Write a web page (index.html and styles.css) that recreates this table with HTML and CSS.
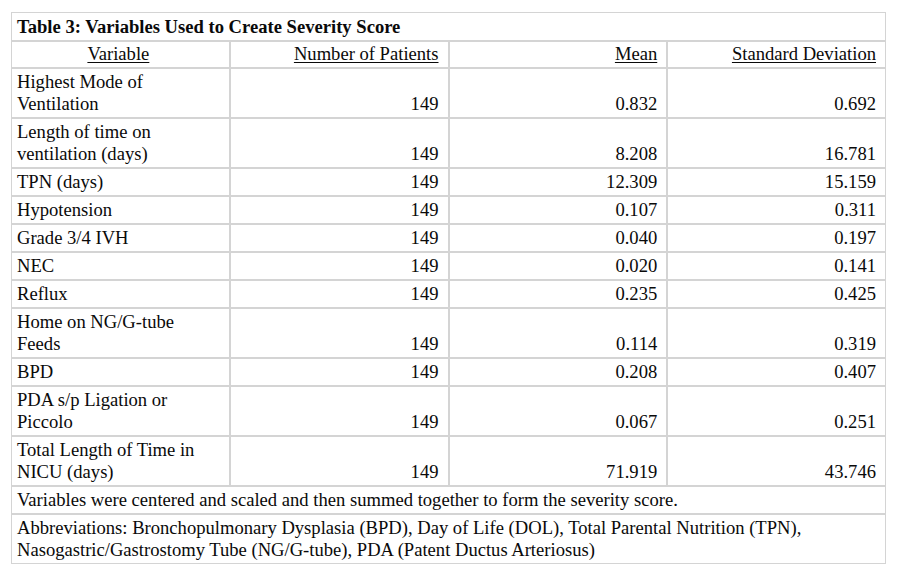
FILE: index.html
```html
<!DOCTYPE html>
<html>
<head>
<meta charset="utf-8">
<link rel="stylesheet" href="styles.css">
</head>
<body>
<table class="tbl">
  <colgroup><col class="c"><col class="c"><col class="c"><col class="c"></colgroup>
  <tr><td class="title" colspan="4">Table 3: Variables Used to Create Severity Score</td></tr>
  <tr class="head">
    <td class="center"><span class="u">Variable</span></td>
    <td class="num"><span class="u">Number of Patients</span></td>
    <td class="num"><span class="u">Mean</span></td>
    <td class="num"><span class="u">Standard Deviation</span></td>
  </tr>
  <tr><td>Highest Mode of<br>Ventilation</td><td class="num">149</td><td class="num">0.832</td><td class="num">0.692</td></tr>
  <tr><td>Length of time on<br>ventilation (days)</td><td class="num">149</td><td class="num">8.208</td><td class="num">16.781</td></tr>
  <tr><td>TPN (days)</td><td class="num">149</td><td class="num">12.309</td><td class="num">15.159</td></tr>
  <tr><td>Hypotension</td><td class="num">149</td><td class="num">0.107</td><td class="num">0.311</td></tr>
  <tr><td>Grade 3/4 IVH</td><td class="num">149</td><td class="num">0.040</td><td class="num">0.197</td></tr>
  <tr><td>NEC</td><td class="num">149</td><td class="num">0.020</td><td class="num">0.141</td></tr>
  <tr><td>Reflux</td><td class="num">149</td><td class="num">0.235</td><td class="num">0.425</td></tr>
  <tr><td>Home on NG/G-tube<br>Feeds</td><td class="num">149</td><td class="num">0.114</td><td class="num">0.319</td></tr>
  <tr><td>BPD</td><td class="num">149</td><td class="num">0.208</td><td class="num">0.407</td></tr>
  <tr><td>PDA s/p Ligation or<br>Piccolo</td><td class="num">149</td><td class="num">0.067</td><td class="num">0.251</td></tr>
  <tr><td>Total Length of Time in<br>NICU (days)</td><td class="num">149</td><td class="num">71.919</td><td class="num">43.746</td></tr>
  <tr><td colspan="4">Variables were centered and scaled and then summed together to form the severity score.</td></tr>
  <tr><td colspan="4">Abbreviations: Bronchopulmonary Dysplasia (BPD), Day of Life (DOL), Total Parental Nutrition (TPN),<br>Nasogastric/Gastrostomy Tube (NG/G-tube), PDA (Patent Ductus Arteriosus)</td></tr>
</table>
</body>
</html>
```
FILE: styles.css
```css
html, body {
  background: #ffffff;
}
body {
  margin: 12px 0 0 11px;
  font-family: "Liberation Serif", "Times New Roman", serif;
  font-size: 18.6px;
  color: #0a0a0a;
}
.tbl {
  width: 875px;
  table-layout: fixed;
  border-collapse: separate;
  border-spacing: 0;
}
.c {
  width: 25%;
}
.tbl td {
  border: 1px solid #d4d4d4;
  padding: 2px 9px 2px 5px;
  line-height: 22px;
  vertical-align: bottom;
  white-space: nowrap;
}
.tbl td.title {
  font-weight: bold;
  padding-top: 3px;
  padding-bottom: 2px;
}
.tbl td.num {
  text-align: right;
}
.tbl td.center {
  text-align: center;
}
.head td {
  padding-top: 1px;
  padding-bottom: 2px;
}
.u {
  text-decoration: underline;
  text-underline-offset: 2px;
}
```
